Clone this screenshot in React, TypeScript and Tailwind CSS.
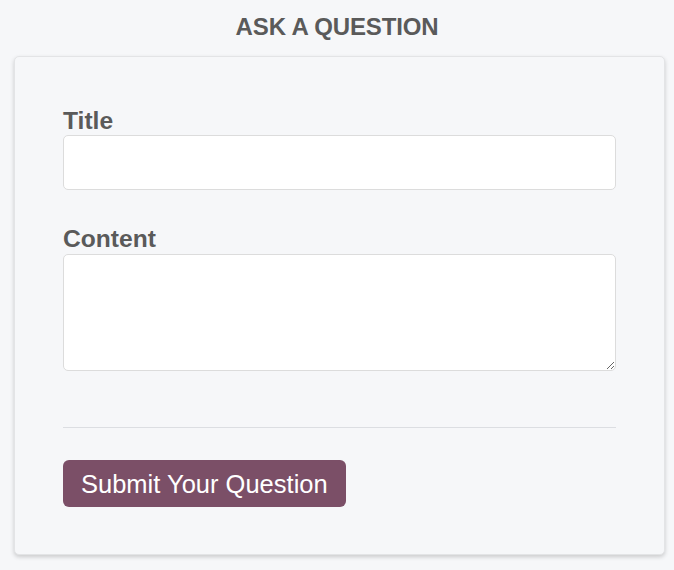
import React from 'react';

export default function App() {
  return (
    <div
      className="min-h-[570px] bg-[#f6f7f9] pt-[13px]"
      style={{ fontFamily: '"Liberation Sans", Arial, sans-serif' }}
    >
      <h1 className="text-center text-[24px] leading-[28px] font-bold text-[#5a5a5a] tracking-[-0.15px]">
        ASK A QUESTION
      </h1>

      <div className="mx-[14px] mt-[15px] w-[651px] rounded-[5px] border border-[#e3e4e6] bg-[#f6f7f9] px-[48px] pt-[50px] pb-[47px] shadow-[0_2px_4px_rgba(0,0,0,0.18)]">
        <form onSubmit={(e) => e.preventDefault()}>
          {/* Title */}
          <label className="block text-[24.6px] leading-[28px] font-bold text-[#5a5a5a]">Title</label>
          <input
            type="text"
            className="block h-[55px] w-full rounded-[5px] border border-[#dcdcdc] bg-white px-3 outline-none"
          />

          {/* Content */}
          <label className="mt-[35px] block text-[24.6px] leading-[28px] font-bold text-[#5a5a5a]">
            Content
          </label>
          <textarea className="mt-[1px] block h-[117px] w-full rounded-[5px] border border-[#dcdcdc] bg-white px-3 outline-none" />

          <hr className="mt-[56px] border-t border-[#dcdee2]" />

          <button
            type="submit"
            className="mt-[32px] h-[47px] rounded-[6px] bg-[#7b4f67] px-[18px] text-[25.5px] leading-[28px] text-white"
          >
            Submit Your Question
          </button>
        </form>
      </div>
    </div>
  );
}
